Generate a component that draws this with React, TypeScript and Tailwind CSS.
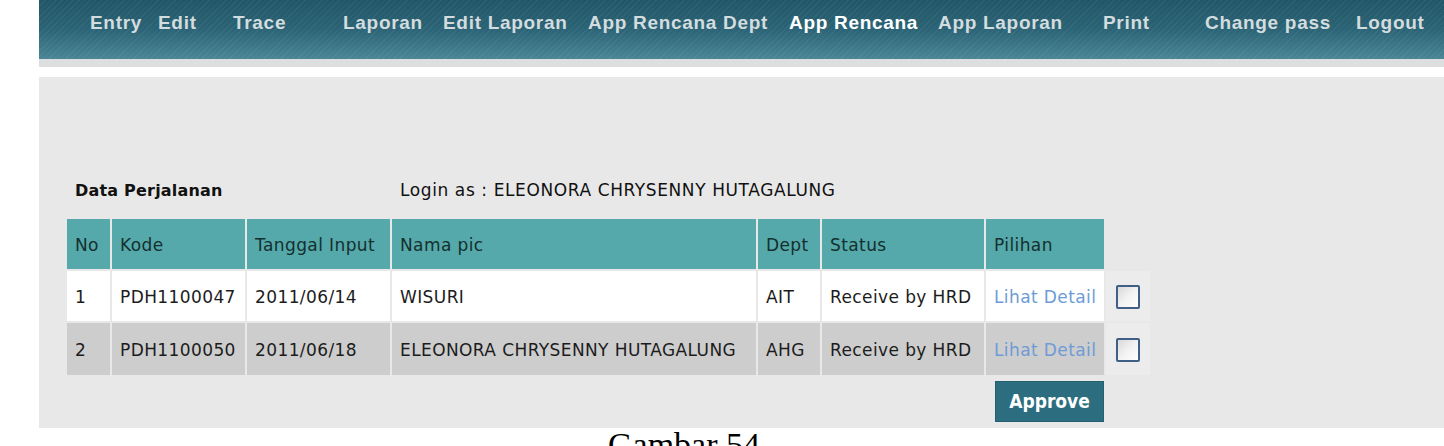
import React from "react";

const navItems: { label: string; w: string; active?: boolean }[] = [
  { label: "Entry", w: "w-[68px]" },
  { label: "Edit", w: "w-[75px]" },
  { label: "Trace", w: "w-[110px]" },
  { label: "Laporan", w: "w-[100px]" },
  { label: "Edit Laporan", w: "w-[145px]" },
  { label: "App Rencana Dept", w: "w-[201px]" },
  { label: "App Rencana", w: "w-[149px]", active: true },
  { label: "App Laporan", w: "w-[165px]" },
  { label: "Print", w: "w-[102px]" },
  { label: "Change pass", w: "w-[151px]" },
  { label: "Logout", w: "w-[80px]" },
];

const rows = [
  { no: "1", kode: "PDH1100047", tgl: "2011/06/14", nama: "WISURI", dept: "AIT", status: "Receive by HRD", bg: "bg-white", h: "h-[50px]" },
  { no: "2", kode: "PDH1100050", tgl: "2011/06/18", nama: "ELEONORA CHRYSENNY HUTAGALUNG", dept: "AHG", status: "Receive by HRD", bg: "bg-[#cdcdcd]", h: "h-[52px]" },
];

function Checkbox() {
  return (
    <div className="w-[24px] h-[24px] border-2 border-[#3f5f86] rounded-[2px] bg-gradient-to-br from-[#d9d9d9] via-[#f2f2f2] to-[#ffffff]" />
  );
}

export default function App() {
  const tbl = { fontFamily: '"DejaVu Sans", Verdana, sans-serif' };
  return (
    <div className="w-[1444px] h-[446px] bg-white overflow-hidden">
      {/* nav */}
      <div className="ml-[39px]">
        <div
          className="h-[59px] flex items-center pl-[51px] pb-[12px] bg-[repeating-linear-gradient(135deg,rgba(255,255,255,0.05)_0px,rgba(255,255,255,0.05)_1px,transparent_1px,transparent_4px),linear-gradient(to_bottom,#215668_0%,#2b6476_50%,#4a8696_100%)]"
          style={{ fontFamily: '"Liberation Sans", Arial, sans-serif' }}
        >
          {navItems.map((n) => (
            <div
              key={n.label}
              className={`${n.w} shrink-0 whitespace-nowrap font-bold text-[19px] tracking-[0.7px] ${n.active ? "text-white" : "text-[#d3dcdf]"}`}
            >
              {n.label}
            </div>
          ))}
        </div>
        <div className="h-[8px] bg-[#dcdedf]" />
        <div className="h-[10px] bg-white" />
        {/* panel */}
        <div className="h-[351px] bg-[#e8e8e8] pt-[104px] pl-[28px]" style={tbl}>
          <div className="flex items-center h-[20px] text-[#111]">
            <div className="w-[333px] pl-[8px] font-bold text-[16px] tracking-[0.2px]">Data Perjalanan</div>
            <div className="text-[17px] tracking-[0.6px]">Login as : ELEONORA CHRYSENNY HUTAGALUNG</div>
          </div>
          <table className="mt-[16px] border-separate border-spacing-[2px] -ml-[2px] text-[17px] tracking-[0.4px] text-[#1c1c1c]">
            <thead>
              <tr className="h-[50px]">
                {[
                  ["No", "w-[43px]"],
                  ["Kode", "w-[133px]"],
                  ["Tanggal Input", "w-[143px]"],
                  ["Nama pic", "w-[364px]"],
                  ["Dept", "w-[62px]"],
                  ["Status", "w-[162px]"],
                  ["Pilihan", "w-[118px]"],
                ].map(([t, w]) => (
                  <th key={t} className={`${w} bg-[#55a9aa] text-left font-normal px-[8px] pt-[3px] text-[#14302f] whitespace-nowrap`}>
                    {t}
                  </th>
                ))}
                <th className="w-[44px]" />
              </tr>
            </thead>
            <tbody>
              {rows.map((r) => (
                <tr key={r.no} className={r.h}>
                  <td className={`${r.bg} px-[8px] pt-[3px]`}>{r.no}</td>
                  <td className={`${r.bg} px-[8px] pt-[3px] whitespace-nowrap`}>{r.kode}</td>
                  <td className={`${r.bg} px-[8px] pt-[3px] whitespace-nowrap`}>{r.tgl}</td>
                  <td className={`${r.bg} px-[8px] pt-[3px] whitespace-nowrap`}>{r.nama}</td>
                  <td className={`${r.bg} px-[8px] pt-[3px]`}>{r.dept}</td>
                  <td className={`${r.bg} px-[8px] pt-[3px] whitespace-nowrap`}>{r.status}</td>
                  <td className={`${r.bg} px-[8px] pt-[3px] whitespace-nowrap text-[#6e9bd6]`}>Lihat Detail</td>
                  <td className="bg-[#ececec] pl-[10px] pt-[1px]">
                    <Checkbox />
                  </td>
                </tr>
              ))}
            </tbody>
          </table>
          <div className="w-[1037px] flex justify-end mt-[4px]">
            <button
              className="w-[109px] h-[41px] bg-[#2c6e80] text-white font-bold text-[19px] border border-[#24606f]"
              style={{ fontFamily: '"DejaVu Sans Condensed", "DejaVu Sans", sans-serif' }}
            >
              Approve
            </button>
          </div>
        </div>
      </div>
      <div
        className="ml-[608px] text-[34px] leading-none text-black whitespace-nowrap"
        style={{ fontFamily: '"Liberation Serif", "Times New Roman", serif' }}
      >
        Gambar 54
      </div>
    </div>
  );
}
